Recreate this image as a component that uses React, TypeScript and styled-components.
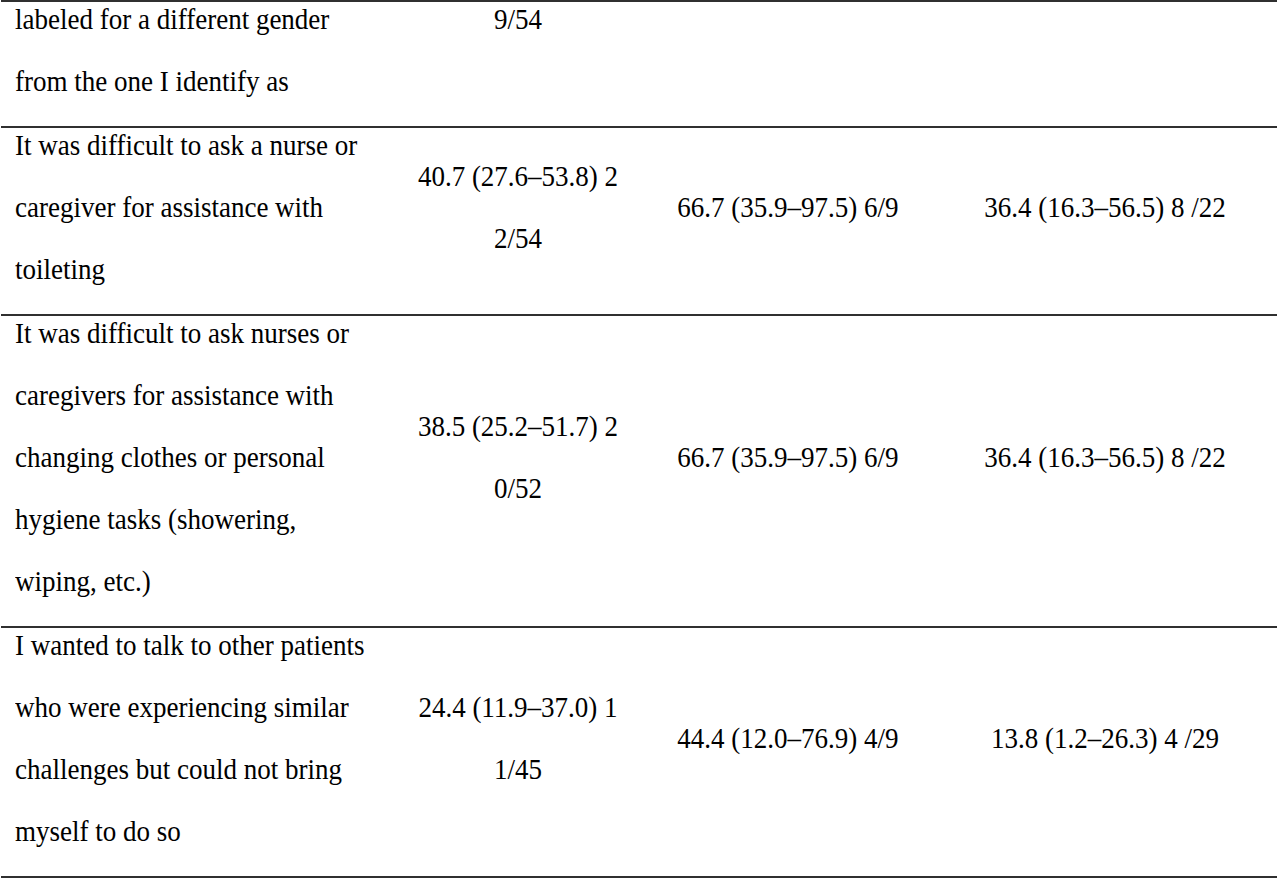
import React from "react";
import styled, { createGlobalStyle } from "styled-components";

const Global = createGlobalStyle`
  html, body { margin: 0; padding: 0; background: #ffffff; }
  body {
    color: #000000;
    overflow: hidden;
  }
`;

const Table = styled.table`
  width: 1276px;
  margin-left: 1px;
  border-collapse: collapse;
  table-layout: fixed;
`;

const Row = styled.tr`
  border-top: 2px solid #303030;
  border-bottom: 2px solid #303030;
`;

type Align = "left" | "center";
type VAlign = "top" | "middle";

const Cell = styled.td<{ $align: Align; $valign: VAlign }>`
  padding: 0 0 0 ${(p) => (p.$align === "left" ? "14px" : "0")};
  vertical-align: ${(p) => p.$valign};
  text-align: ${(p) => p.$align};
`;

const Line = styled.div<{ $align: Align }>`
  height: 62px;
  font-family: "Liberation Serif", "Times New Roman", serif;
  font-size: 30px;
  line-height: 34px;
  color: #000000;
  white-space: nowrap;
  transform: scaleX(0.9);
  transform-origin: ${(p) => (p.$align === "left" ? "left" : "center")} top;
`;

type CellData = { lines: string[]; valign?: VAlign };
type RowData = CellData[];

const rows: RowData[] = [
  [
    { lines: ["labeled for a different gender", "from the one I identify as"] },
    { lines: ["9/54"], valign: "top" },
    { lines: [] },
    { lines: [] },
  ],
  [
    { lines: ["It was difficult to ask a nurse or", "caregiver for assistance with", "toileting"] },
    { lines: ["40.7 (27.6–53.8) 2", "2/54"] },
    { lines: ["66.7 (35.9–97.5) 6/9"] },
    { lines: ["36.4 (16.3–56.5) 8 /22"] },
  ],
  [
    {
      lines: [
        "It was difficult to ask nurses or",
        "caregivers for assistance with",
        "changing clothes or personal",
        "hygiene tasks (showering,",
        "wiping, etc.)",
      ],
    },
    { lines: ["38.5 (25.2–51.7) 2", "0/52"] },
    { lines: ["66.7 (35.9–97.5) 6/9"] },
    { lines: ["36.4 (16.3–56.5) 8 /22"] },
  ],
  [
    {
      lines: [
        "I wanted to talk to other patients",
        "who were experiencing similar",
        "challenges but could not bring",
        "myself to do so",
      ],
    },
    { lines: ["24.4 (11.9–37.0) 1", "1/45"] },
    { lines: ["44.4 (12.0–76.9) 4/9"] },
    { lines: ["13.8 (1.2–26.3) 4 /29"] },
  ],
];

const widths = [392, 250, 290, 344];

export default function App() {
  return (
    <>
      <Global />
      <Table>
        <colgroup>
          {widths.map((w, i) => (
            <col key={i} style={{ width: w }} />
          ))}
        </colgroup>
        <tbody>
          {rows.map((r, ri) => (
            <Row key={ri}>
              {r.map((c, ci) => {
                const align: Align = ci === 0 ? "left" : "center";
                const valign: VAlign = c.valign ?? (ci === 0 ? "top" : "middle");
                return (
                  <Cell key={ci} $align={align} $valign={valign}>
                    {c.lines.map((l, li) => (
                      <Line key={li} $align={align}>
                        {l}
                      </Line>
                    ))}
                  </Cell>
                );
              })}
            </Row>
          ))}
        </tbody>
      </Table>
    </>
  );
}
